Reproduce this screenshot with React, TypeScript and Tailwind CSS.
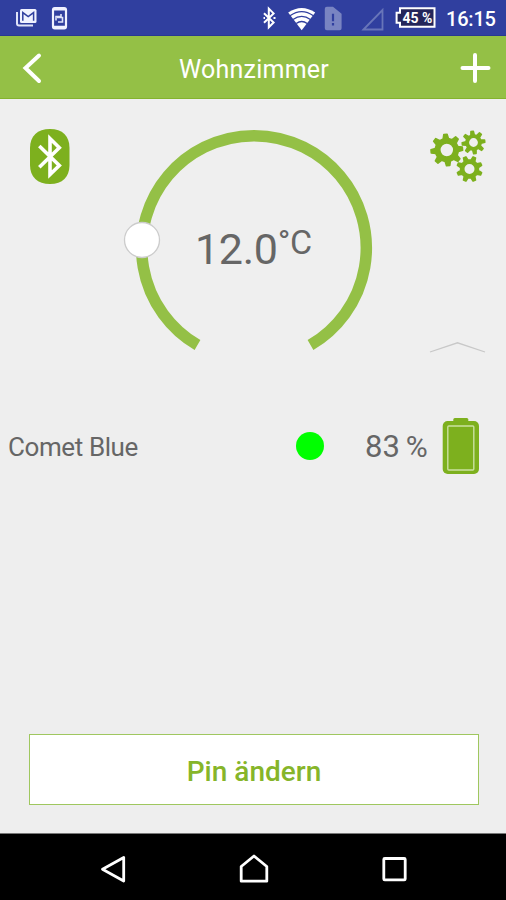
import React from "react";

function gearPath(cx: number, cy: number, outer: number, root: number, hole: number, offset: number) {
  const teeth = 8;
  const step = 360 / teeth;
  const point = (r: number, deg: number) => {
    const a = (deg * Math.PI) / 180;
    return `${(cx + r * Math.cos(a)).toFixed(2)} ${(cy + r * Math.sin(a)).toFixed(2)}`;
  };
  const points: string[] = [];
  for (let i = 0; i < teeth; i++) {
    const a = offset + i * step;
    points.push(point(root, a - 13), point(outer, a - 6), point(outer, a + 6), point(root, a + 13));
  }
  return `M${points.join("L")}ZM${cx - hole} ${cy}a${hole} ${hole} 0 1 0 ${hole * 2} 0a${hole} ${hole} 0 1 0 ${-hole * 2} 0Z`;
}

function StatusBar() {
  return (
    <div className="flex h-[36px] items-center border-b border-[#283891] bg-[#303f9f] text-white">
      <svg className="ml-[15px] h-[20px] w-[22px]" viewBox="0 0 22 20" fill="none">
        <path d="M2 4v11.5a2 2 0 0 0 2 2h14" stroke="#dfe3f8" strokeWidth="2" />
        <rect x="5" y="1" width="16.5" height="14" rx="1.5" fill="#f0f2ff" />
        <path d="M7.8 12.8V4.6l5.4 4 5.4-4v8.2" stroke="#303f9f" strokeWidth="1.5" />
      </svg>
      <svg className="ml-[14px] h-[24px] w-[18px]" viewBox="0 0 18 24" fill="none">
        <rect x="2" y="2" width="13" height="20.4" rx="1.8" stroke="#f0f2ff" strokeWidth="2.2" />
        <path d="M2 3.4h13M2 20.8h13" stroke="#f0f2ff" strokeWidth="2.2" />
        <path d="M5 14.5v-4h5V8M7 16h4.500v-4.500H6" stroke="#dfe3f8" strokeWidth="1.6" />
      </svg>
      <div className="ml-auto flex h-full items-center">
        <svg className="h-[36px] w-[140px]" viewBox="0 0 140 36" fill="none">
          <path d="m9 13.2 9.600 9.300-4.800 4.800V8.600l4.800 4.800L9 22.700" stroke="white" strokeWidth="2" />
          <path d="M8.500 18h1.500M18.500 18h2" stroke="white" strokeWidth="1.800" />
          <path d="M33.200 12.600Q46.700 3.600 60.200 12.600L46.700 30.300Z" fill="white" />
          <path d="M35 15.800Q46.700 7.400 58.400 15.800M38 19.600Q46.700 13 55.400 19.600M41.200 23.600Q46.700 19.400 52.200 23.600" stroke="#303f9f" strokeWidth="1.300" />
          <path d="M69.800 6.800h8.200l8.600 7v14.400q0 2-2 2H71.800q-2 0-2-2V8.800q0-2 2-2Z" fill="#7984c2" />
          <path d="M78 13.800v7.400M78 23v2.600" stroke="#303f9f" strokeWidth="2.200" />
          <path d="M108.500 29.500 127.500 10v19.500Z" stroke="#6875b9" strokeWidth="1.800" />
        </svg>
        <div className="relative h-[21px] w-[41px]">
          <svg className="absolute inset-0" width="41" height="21" viewBox="0 0 41 21">
            <path d="M5 1.200h34.500v18.600H5v-4H1.600v-10H5Z" fill="#24265a" stroke="white" strokeWidth="2" />
          </svg>
          <span className="absolute inset-0 flex items-center justify-center pl-[4px] font-['Roboto',sans-serif] text-[14px] leading-none font-bold whitespace-pre">45 %</span>
        </div>
        <span className="mt-[2px] mr-[10px] ml-[10px] w-[50px] font-['Roboto',sans-serif] text-[20px] font-medium tracking-[-0.2px]">16:15</span>
      </div>
    </div>
  );
}

export default function App() {
  return (
    <div className="flex h-[900px] w-[506px] flex-col overflow-hidden bg-[#efefef] font-['Roboto',sans-serif] text-[#666666]">
      <StatusBar />
      <header className="grid h-[63px] shrink-0 grid-cols-[60px_1fr_60px] items-center border-b border-[#84b32e] bg-[#94c046] text-white">
        <svg className="h-[62px] w-[60px]" viewBox="0 0 60 62" fill="none">
          <path d="M39 19.5 25.5 32 39 45" stroke="white" strokeWidth="4" strokeLinecap="round" />
        </svg>
        <h1 className="mt-[4px] pl-[2px] text-center text-[25px] leading-none tracking-[0.25px]">Wohnzimmer</h1>
        <svg className="h-[62px] w-[60px]" viewBox="0 0 60 62" fill="none">
          <path d="M16.5 32h26M29 19v26" stroke="white" strokeWidth="4" strokeLinecap="round" />
        </svg>
      </header>

      <section className="flex h-[271px] shrink-0">
        <div className="w-[120px] pt-[30px] pl-[29px]">
          <svg width="42" height="56" viewBox="0 0 42 56" fill="none">
            <path d="M21 0C33.5 0 40.5 7 40.5 19V36C40.5 48 33.5 55 21 55S1 48 1 36V19C1 7 8.500 0 21 0Z" fill="#7db01e" />
            <path d="m10.300 17 20 19.500L21 45.500V9.500l9.300 9.300-20 19.500" stroke="white" strokeWidth="3.600" />
          </svg>
        </div>
        <div className="relative h-[260px] w-[260px]">
          <svg width="260" height="260" viewBox="0 0 260 260" fill="none">
            <path d="M77.500 246A112.300 112.300 0 1 1 190.500 246" stroke="#94c046" strokeWidth="11.500" />
            <circle cx="22" cy="141" r="17.500" fill="white" stroke="#cccccc" strokeWidth="1.300" />
          </svg>
          <div className="absolute top-[125px] left-[75px] flex items-start leading-none whitespace-nowrap">
            <span className="text-[43px] leading-[50px] tracking-[-0.3px]">12.0</span>
            <span className="text-[34px] leading-[36px] tracking-[-0.3px]">°C</span>
          </div>
        </div>
        <div className="flex w-[126px] flex-col items-end pt-[30px] pr-[20px]">
          <svg width="56" height="56" viewBox="430 129 56 56" fill="#7db01e" stroke="#7db01e" strokeWidth="1.600" strokeLinejoin="round" fillRule="evenodd">
            <path d={gearPath(446.800, 150, 15.800, 11.600, 7, -5)} />
            <path d={gearPath(473.500, 142.500, 11.300, 7.600, 5.200, -7)} />
            <path d={gearPath(469.500, 169, 12.600, 9, 5.800, 22.500)} />
          </svg>
          <svg className="mt-[155px]" width="58" height="15" viewBox="0 0 58 15" fill="none">
            <path d="M2 12 29.500 2.800 57 12" stroke="#c8c8c8" strokeWidth="1.300" />
          </svg>
        </div>
      </section>

      <section className="flex h-[152px] shrink-0 items-center bg-[#eeeeee] pl-[8px]">
        <span className="mt-[2px] w-[288px] text-[26px] tracking-[-0.400px]">Comet Blue</span>
        <span className="size-[28px] rounded-full bg-[#00ff00]" />
        <span className="mt-[3px] ml-[41px] flex w-[77px] items-baseline gap-[6px] text-[31px] whitespace-nowrap">
          <span>83</span>
          <span className="text-[30px] tracking-[-0.5px]">%</span>
        </span>
        <svg width="38" height="58" viewBox="0 0 38 58">
          <rect x="11.300" y="1" width="15" height="8" rx="1.500" fill="#7db01e" />
          <rect x="0.700" y="4" width="36.300" height="53" rx="5" fill="#7db01e" />
          <rect x="5.800" y="9" width="26" height="44" rx="1" fill="none" stroke="#cae1a0" strokeWidth="1.400" />
        </svg>
      </section>

      <main className="flex flex-1 flex-col justify-end bg-[#eeeeee] px-[28px] pb-[28px]">
        <button className="mr-[-1px] ml-[1px] h-[71px] w-[450px] border border-[#9fc75f] bg-white pt-[4px] text-[28px] font-medium text-[#86b52a]">Pin ändern</button>
      </main>

      <nav className="h-[67px] shrink-0 border-t border-[#777] bg-black">
        <svg width="506" height="66" viewBox="0 834 506 66" fill="none" stroke="white" strokeWidth="2.800" strokeLinejoin="round">
          <path d="M102.500 869.200 123.700 857.500v23.500Z" />
          <path d="M241.200 881.200v-14.700l12.800-10.500 12.800 10.500v14.700Z" />
          <rect x="383.800" y="858.500" width="21.400" height="21.400" rx="1" />
        </svg>
      </nav>
    </div>
  );
}
